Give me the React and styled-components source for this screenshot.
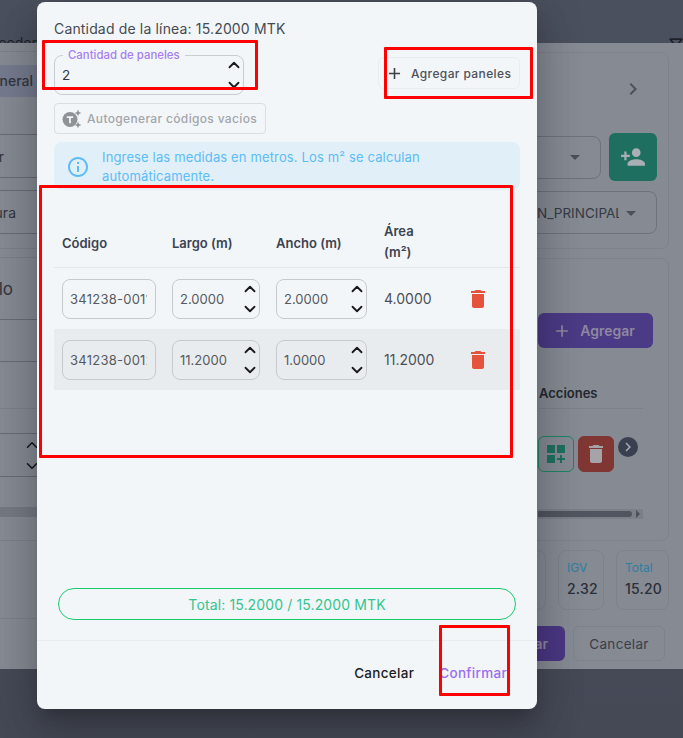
import React from 'react'
import styled, { createGlobalStyle } from 'styled-components'
import { ChevronUp, ChevronDown } from 'lucide-react'
import {
  MdAdd,
  MdArrowDropDown,
  MdChevronRight,
  MdDashboardCustomize,
  MdDelete,
  MdInfoOutline,
  MdOutlineFilterAlt,
  MdPersonAdd,
} from 'react-icons/md'

const GlobalStyle = createGlobalStyle`
  html, body {
    margin: 0;
    padding: 0;
    background: #484c5a;
  }
  * {
    box-sizing: border-box;
  }
`

const Page = styled.div`
  position: relative;
  width: 683px;
  height: 738px;
  overflow: hidden;
  background: linear-gradient(180deg, #4b505e 0%, #454956 100%);
  font-family: Inter, 'Noto Sans', sans-serif;
`

const TopBar = styled.div`
  height: 43px;
  padding-top: 34px;
  overflow: hidden;
  display: flex;
  justify-content: space-between;
  color: #1d2028;
  font-size: 14px;
  line-height: 17px;
`

const TopLabel = styled.span`
  width: 37px;
  display: flex;
  justify-content: flex-end;
  white-space: nowrap;
`

const FunnelSlot = styled.span`
  margin-top: 1px;
  margin-right: -3px;
  font-size: 20px;
`

const Behind = styled.div`
  height: 626px;
  background: #858a93;
  display: flex;
  justify-content: space-between;
  overflow: hidden;
  color: #33363f;
`

const LeftStrip = styled.div`
  width: 37px;
  display: flex;
  flex-direction: column;
  overflow: hidden;
  flex-shrink: 0;
`

const LeftRow = styled.div`
  height: ${(p) => p.$h}px;
  flex-shrink: 0;
  display: flex;
  align-items: center;
  justify-content: flex-end;
  padding-right: ${(p) => p.$pad || 0}px;
  white-space: nowrap;
  font-size: ${(p) => p.$size || 13}px;
  font-weight: ${(p) => p.$weight || 400};
  background: ${(p) => p.$bg || 'transparent'};
  border-bottom: 1px solid ${(p) => (p.$line === 'strong' ? '#686c75' : p.$line === 'soft' ? '#7b8089' : 'transparent')};
`

const StepperLeft = styled.div`
  margin-right: -4px;
  display: flex;
  flex-direction: column;
  gap: 3px;
  color: #14161b;
`

const RightStrip = styled.div`
  width: 146px;
  flex-shrink: 0;
  padding-right: 14px;
  display: flex;
  flex-direction: column;
  overflow: hidden;
`

const Card = styled.div`
  margin-left: -20px;
  padding-left: 20px;
  height: ${(p) => p.$h}px;
  margin-top: ${(p) => p.$top}px;
  flex-shrink: 0;
  border: 1px solid #7d828b;
  border-radius: 8px;
  display: flex;
  flex-direction: column;
`

const ChevronSlot = styled.div`
  margin-top: 24px;
  padding-right: 23px;
  display: flex;
  justify-content: flex-end;
  font-size: 24px;
  color: #4d515c;
  line-height: 0;
`

const SelectRow = styled.div`
  margin-top: ${(p) => p.$top}px;
  padding-right: 11px;
  display: flex;
  align-items: center;
  gap: 8px;
`

const GhostSelect = styled.div`
  flex: 1;
  height: 43px;
  margin-left: -20px;
  border: 1px solid #6e727b;
  border-radius: 8px;
  display: flex;
  align-items: center;
  justify-content: flex-end;
  padding-right: 13px;
  font-size: 24px;
  color: #4b4f5a;
`

const GhostValue = styled.span`
  width: 82px;
  overflow: hidden;
  white-space: nowrap;
  font-size: 13.5px;
  color: #363a44;
`

const GreenSquare = styled.div`
  width: 48px;
  height: 48px;
  border-radius: 6px;
  background: #1e6f5f;
  color: #a9b0b5;
  font-size: 26px;
  display: flex;
  align-items: center;
  justify-content: center;
`

const AddGhost = styled.div`
  margin-top: 54px;
  margin-right: 15px;
  height: 35px;
  padding-right: 4px;
  border-radius: 6px;
  background: #4b3a85;
  color: #8d889f;
  font-size: 14px;
  font-weight: 600;
  display: flex;
  align-items: center;
  justify-content: center;
  gap: 8px;
`

const ActionsTitle = styled.div`
  margin-top: 37px;
  margin-left: 1px;
  margin-right: 25px;
  padding-bottom: 7px;
  border-bottom: 1px solid #7b8089;
  font-size: 13px;
  line-height: 16px;
  font-weight: 600;
  color: #24272f;
`

const ActionRow = styled.div`
  margin-top: 27px;
  display: flex;
  align-items: flex-start;
  gap: 4px;
`

const ActionSquare = styled.div`
  width: 36px;
  height: 36px;
  border-radius: 6px;
  font-size: 24px;
  display: flex;
  align-items: center;
  justify-content: center;
  border: 1px solid ${(p) => (p.$danger ? '#803633' : '#1d8562')};
  background: ${(p) => (p.$danger ? '#803633' : 'transparent')};
  color: ${(p) => (p.$danger ? '#a5a3a8' : '#1e7060')};
`

const RoundArrow = styled.div`
  width: 20px;
  height: 20px;
  margin-top: 1px;
  border-radius: 50%;
  background: #3a4050;
  color: #a5a9b2;
  font-size: 18px;
  display: flex;
  align-items: center;
  justify-content: center;
`

const ScrollTrack = styled.div`
  margin-top: 37px;
  margin-right: 25px;
  height: 10px;
  background: #7a7f88;
  display: flex;
  align-items: center;
  justify-content: space-between;
  padding-right: 3px;
`

const ScrollThumb = styled.div`
  width: 94px;
  height: 6px;
  border-radius: 0 3px 3px 0;
  background: #51555f;
`

const ScrollArrow = styled.div`
  border-left: 4px solid #4c505a;
  border-top: 4px solid transparent;
  border-bottom: 4px solid transparent;
`

const TotalsRow = styled.div`
  margin-top: 9px;
  display: flex;
  justify-content: flex-end;
  gap: 12px;
  height: 60px;
  flex-shrink: 0;
`

const TotalBox = styled.div`
  width: ${(p) => p.$w}px;
  flex-shrink: 0;
  padding: 9px 0 0 8px;
  border: 1px solid #7d828b;
  border-radius: 8px;
  display: flex;
  flex-direction: column;
  gap: 5px;
`

const TotalLabel = styled.span`
  font-size: 12px;
  line-height: 15px;
  color: #2f7ea3;
`

const TotalValue = styled.span`
  font-size: 14px;
  line-height: 18px;
  font-weight: 500;
  letter-spacing: 0.2px;
  color: #2b2e37;
  white-space: nowrap;
`

const GhostButtons = styled.div`
  margin-top: 16px;
  margin-left: -20px;
  padding-right: 4px;
  display: flex;
  justify-content: flex-end;
  gap: 8px;
`

const GhostPrimary = styled.div`
  width: 48px;
  height: 35px;
  border-radius: 0 6px 6px 0;
  background: #4a3783;
  color: #8c86a0;
  font-size: 14px;
  font-weight: 600;
  display: flex;
  align-items: center;
  justify-content: flex-end;
  padding-right: 17px;
`

const GhostCancel = styled.div`
  width: 92px;
  height: 35px;
  border: 1px solid #7d828b;
  border-radius: 6px;
  color: #3a3e49;
  font-size: 13.5px;
  letter-spacing: 0.3px;
  display: flex;
  align-items: center;
  justify-content: center;
`

const Modal = styled.div`
  position: absolute;
  top: 2px;
  left: 37px;
  width: 500px;
  height: 707px;
  background: #f3f6f9;
  border-radius: 8px;
  box-shadow: 0 11px 15px -7px rgba(0, 0, 0, 0.2), 0 24px 38px 3px rgba(0, 0, 0, 0.14), 0 9px 46px 8px rgba(0, 0, 0, 0.12);
  display: flex;
  flex-direction: column;
`

const ModalBody = styled.div`
  flex: 1;
  padding: 17px 17px 0;
  display: flex;
  flex-direction: column;
`

const LineTitle = styled.div`
  font-size: 14px;
  line-height: 20px;
  letter-spacing: 0.16px;
  color: #454a52;
`

const ControlsRow = styled.div`
  margin-top: 16px;
  display: flex;
  justify-content: space-between;
  align-items: flex-start;
`

const QtyField = styled.div`
  position: relative;
  width: 190px;
  height: 40px;
  border: 1px solid #c9cdd2;
  border-radius: 8px;
  padding-left: 7px;
  display: flex;
  align-items: center;
  justify-content: space-between;
  font-size: 13.5px;
  color: #33373e;
`

const FloatLabel = styled.span`
  position: absolute;
  top: -7px;
  left: 8px;
  padding: 0 5px;
  background: #f3f6f9;
  font-size: 11.4px;
  line-height: 13px;
  font-weight: 500;
  color: #a87ff0;
`

const AddPanelsButton = styled.button`
  width: 142px;
  height: 32px;
  margin-top: 2px;
  border: 1px solid #e9ecf0;
  border-radius: 6px;
  background: transparent;
  padding: 0 0 0 6px;
  display: flex;
  align-items: center;
  gap: 7px;
  font-family: inherit;
  font-size: 12px;
  font-weight: 500;
  letter-spacing: 0.38px;
  color: #4d5157;
  white-space: nowrap;
`

const AutoButton = styled.button`
  align-self: flex-start;
  width: 212px;
  height: 31px;
  margin-top: 8px;
  border: 1px solid #dadde1;
  border-radius: 4px;
  background: transparent;
  padding: 0 0 0 6px;
  display: flex;
  align-items: center;
  gap: 4px;
  font-family: inherit;
  font-size: 12px;
  font-weight: 500;
  letter-spacing: 0.34px;
  color: #a2a5a9;
  white-space: nowrap;
`

const InfoAlert = styled.div`
  height: 48px;
  margin-top: 8px;
  padding: 1px 0 0 12px;
  border-radius: 8px;
  background: #e1eff8;
  color: #5cbcf6;
  display: flex;
  align-items: center;
  gap: 12px;
  font-size: 24px;
`

const InfoText = styled.div`
  width: 390px;
  font-size: 13px;
  line-height: 19px;
  letter-spacing: 0.14px;
`

const PanelGrid = styled.div`
  display: grid;
  grid-template-columns: 110px 104px 108px 82px 24px;
  align-items: center;
  padding: 0 8px;
`

const PanelHead = styled(PanelGrid)`
  margin-top: 28px;
  height: 50px;
  padding-top: 2px;
  border-bottom: 1px solid #e4e8ee;
  font-size: 13px;
  line-height: 21px;
  font-weight: 600;
  color: #3b4350;
`

const AreaHead = styled.span`
  width: 50px;
  margin-bottom: 4px;
`

const PanelRow = styled(PanelGrid)`
  height: 61px;
  background: ${(p) => (p.$striped ? '#e9ecef' : 'transparent')};
`

const CodeInput = styled.input`
  width: 94px;
  height: 40px;
  padding: 0 8px 0 7px;
  border: 1px solid #c6cad0;
  border-radius: 8px;
  background: transparent;
  font-family: inherit;
  font-size: 13px;
  letter-spacing: 0.25px;
  color: #555a61;
  outline: none;
`

const MeasureField = styled.div`
  width: ${(p) => p.$w}px;
  height: 40px;
  padding: 0 0 0 7px;
  border: 1px solid #c6cad0;
  border-radius: 8px;
  display: flex;
  align-items: center;
  justify-content: space-between;
  font-size: 13px;
  color: #555a61;
`

const Stepper = styled.div`
  display: flex;
  flex-direction: column;
  gap: 2px;
  color: #17191d;
`

const AreaValue = styled.span`
  font-size: 14px;
  color: #4b5056;
`

const TrashButton = styled.span`
  font-size: 24px;
  line-height: 0;
  color: #e5533d;
`

const Spacer = styled.div`
  flex: 1;
`

const TotalPill = styled.div`
  height: 32px;
  margin: 0 4px 20px;
  border: 1px solid #1cc96e;
  border-radius: 16px;
  display: flex;
  align-items: center;
  justify-content: center;
  font-size: 14px;
  letter-spacing: 0.12px;
  color: #35c48f;
`

const ModalFooter = styled.div`
  height: 69px;
  border-top: 1px solid #e8ebef;
  padding: 0 30px 5px 0;
  display: flex;
  align-items: center;
  justify-content: flex-end;
  gap: 25px;
`

const TextButton = styled.button`
  border: 0;
  background: none;
  padding: 0;
  font-family: inherit;
  font-size: 13.5px;
  font-weight: 500;
  letter-spacing: 0.3px;
  color: ${(p) => (p.$primary ? '#9a6df1' : '#1b1c1f')};
`

const Mark = styled.div`
  position: absolute;
  left: ${(p) => p.$x}px;
  top: ${(p) => p.$y}px;
  width: ${(p) => p.$w}px;
  height: ${(p) => p.$h}px;
  border: 3px solid #fe0000;
  border-radius: 1px;
  pointer-events: none;
`

function AutoIcon() {
  return (
    <svg width="22" height="22" viewBox="0 0 22 22">
      <circle cx="9" cy="11.5" r="7.5" fill="#8f9296" />
      <path d="M5.8 8.2h6.4v1.7H9.9v5.4H8.1V9.9H5.8z" fill="#f3f6f9" />
      <path d="M17 1.5l1 2.4 2.4 1-2.4 1-1 2.4-1-2.4-2.4-1 2.4-1zM17 13.5l1 2.4 2.4 1-2.4 1-1 2.4-1-2.4-2.4-1 2.4-1z" fill="#8f9296" />
    </svg>
  )
}

function Arrows() {
  return (
    <Stepper>
      <ChevronUp size={18} strokeWidth={2.4} />
      <ChevronDown size={18} strokeWidth={2.4} />
    </Stepper>
  )
}

function Measure({ value, width }) {
  return (
    <MeasureField $w={width}>
      {value}
      <Arrows />
    </MeasureField>
  )
}

function BehindDialog() {
  return (
    <Behind>
      <LeftStrip>
        <LeftRow $h={9} $line="soft" />
        <LeftRow $h={13} />
        <LeftRow $h={32} $bg="#757b8e" $pad={4} $size={14} $weight={500}>General</LeftRow>
        <LeftRow $h={38} $line="strong" />
        <LeftRow $h={43} $line="strong" $pad={33} $size={14}>Proveedor</LeftRow>
        <LeftRow $h={13} $line="strong" />
        <LeftRow $h={43} $line="strong" $pad={21} $size={14}>Factura</LeftRow>
        <LeftRow $h={15} $line="soft" />
        <LeftRow $h={9} $line="soft" />
        <LeftRow $h={62} $line="strong" $pad={24} $size={17}>Artículo</LeftRow>
        <LeftRow $h={42} $line="strong" />
        <LeftRow $h={47} $line="soft" />
        <LeftRow $h={25} $line="strong" />
        <LeftRow $h={43} $line="strong">
          <StepperLeft>
            <ChevronUp size={18} strokeWidth={2} />
            <ChevronDown size={18} strokeWidth={2} />
          </StepperLeft>
        </LeftRow>
        <LeftRow $h={30} />
        <LeftRow $h={10} $bg="#747983" />
        <LeftRow $h={24} $line="soft" />
        <LeftRow $h={78} $line="soft" />
      </LeftStrip>

      <RightStrip>
        <Card $top={9} $h={197}>
          <ChevronSlot>
            <MdChevronRight />
          </ChevronSlot>
          <SelectRow $top={32}>
            <GhostSelect>
              <MdArrowDropDown />
            </GhostSelect>
            <GreenSquare>
              <MdPersonAdd />
            </GreenSquare>
          </SelectRow>
          <SelectRow $top={10}>
            <GhostSelect>
              <GhostValue>N_PRINCIPAL</GhostValue>
              <MdArrowDropDown />
            </GhostSelect>
          </SelectRow>
        </Card>

        <Card $top={9} $h={283}>
          <AddGhost>
            <MdAdd size={20} />
            Agregar
          </AddGhost>
          <ActionsTitle>Acciones</ActionsTitle>
          <ActionRow>
            <ActionSquare>
              <MdDashboardCustomize />
            </ActionSquare>
            <ActionSquare $danger>
              <MdDelete />
            </ActionSquare>
            <RoundArrow>
              <MdChevronRight />
            </RoundArrow>
          </ActionRow>
          <ScrollTrack>
            <ScrollThumb />
            <ScrollArrow />
          </ScrollTrack>
        </Card>

        <TotalsRow>
          <TotalBox $w={26} />
          <TotalBox $w={46}>
            <TotalLabel>IGV</TotalLabel>
            <TotalValue>2.32</TotalValue>
          </TotalBox>
          <TotalBox $w={53}>
            <TotalLabel>Total</TotalLabel>
            <TotalValue>15.20</TotalValue>
          </TotalBox>
        </TotalsRow>

        <GhostButtons>
          <GhostPrimary>ar</GhostPrimary>
          <GhostCancel>Cancelar</GhostCancel>
        </GhostButtons>
      </RightStrip>
    </Behind>
  )
}

function PanelsModal() {
  return (
    <Modal>
      <ModalBody>
        <LineTitle>Cantidad de la línea: 15.2000 MTK</LineTitle>
        <ControlsRow>
          <QtyField>
            <FloatLabel>Cantidad de paneles</FloatLabel>
            2
            <Arrows />
          </QtyField>
          <AddPanelsButton>
            <MdAdd size={19} color="#3d4046" />
            Agregar paneles
          </AddPanelsButton>
        </ControlsRow>
        <AutoButton>
          <AutoIcon />
          Autogenerar códigos vacíos
        </AutoButton>
        <InfoAlert>
          <MdInfoOutline />
          <InfoText>Ingrese las medidas en metros. Los m² se calculan automáticamente.</InfoText>
        </InfoAlert>

        <PanelHead>
          <span>Código</span>
          <span>Largo (m)</span>
          <span>Ancho (m)</span>
          <AreaHead>Área (m²)</AreaHead>
        </PanelHead>
        <PanelRow>
          <CodeInput readOnly value="341238-0011" />
          <Measure value="2.0000" width={88} />
          <Measure value="2.0000" width={91} />
          <AreaValue>4.0000</AreaValue>
          <TrashButton><MdDelete /></TrashButton>
        </PanelRow>
        <PanelRow $striped>
          <CodeInput readOnly value="341238-0012" />
          <Measure value="11.2000" width={88} />
          <Measure value="1.0000" width={91} />
          <AreaValue>11.2000</AreaValue>
          <TrashButton><MdDelete /></TrashButton>
        </PanelRow>

        <Spacer />
        <TotalPill>Total: 15.2000 / 15.2000 MTK</TotalPill>
      </ModalBody>
      <ModalFooter>
        <TextButton>Cancelar</TextButton>
        <TextButton $primary>Confirmar</TextButton>
      </ModalFooter>
    </Modal>
  )
}

export default function App() {
  return (
    <Page>
      <GlobalStyle />
      <TopBar>
        <TopLabel>Proveedor</TopLabel>
        <FunnelSlot><MdOutlineFilterAlt /></FunnelSlot>
      </TopBar>
      <BehindDialog />
      <PanelsModal />
      <Mark $x={42} $y={40} $w={216} $h={50} />
      <Mark $x={384} $y={47} $w={149} $h={52} />
      <Mark $x={39} $y={185} $w={474} $h={273} />
      <Mark $x={439} $y={625} $w={71} $h={71} />
    </Page>
  )
}
